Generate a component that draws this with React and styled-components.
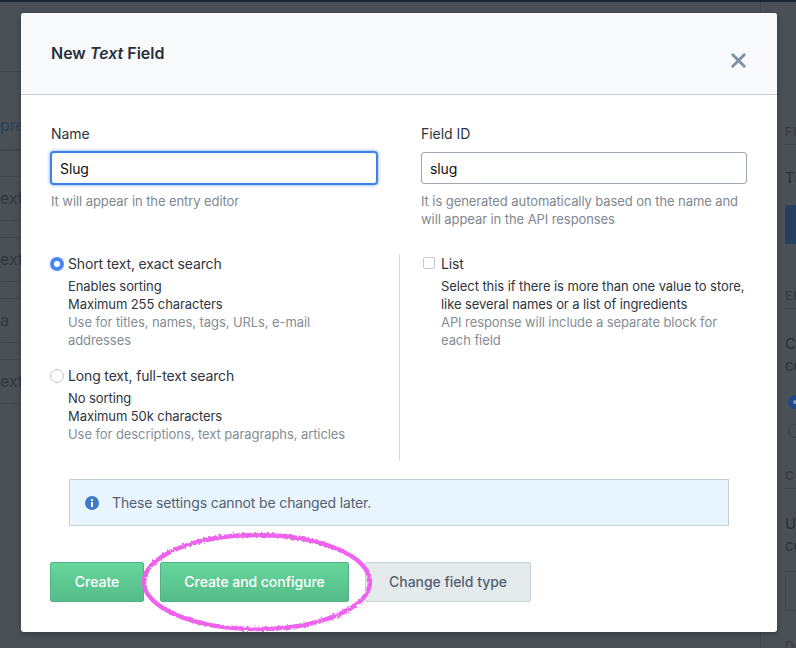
import React from "react";
import styled, { createGlobalStyle } from "styled-components";
import { X } from "lucide-react";

const Global = createGlobalStyle`
  html, body {
    margin: 0;
    padding: 0;
    height: 100%;
    background: #4b5056;
  }
  * { box-sizing: border-box; }
`;

const Page = styled.div`
  position: relative;
  width: 796px;
  height: 648px;
  overflow: hidden;
  background: #4b5056;
  border-top: 2px solid #1d2630;
  font-family: Inter, "Noto Sans", sans-serif;
  font-size: 14px;
  line-height: 18px;
  color: #2f353d;
`;

// What is behind the modal: the content type editor, dimmed
const Backdrop = styled.div`
  display: flex;
  height: 100%;
`;

const Main = styled.div`
  flex: 1;
  overflow: hidden;
`;

const MainHead = styled.div`
  height: 70px;
  border-bottom: 1px solid #41464c;
`;

const TabLabel = styled.div`
  padding-top: 44px;
  height: 79px;
  border-bottom: 2px solid #42474d;
  color: #2d4058;
  font-size: 16px;
  white-space: nowrap;
`;

const BgRow = styled.div`
  height: 45px;
  margin-top: ${(props) => props.$top}px;
  border-top: 1px solid #41464c;
  border-bottom: 1px solid #41464c;
  padding-top: 12px;
  color: #32373d;
  font-size: 16px;
  white-space: nowrap;
`;

const Sidebar = styled.div`
  width: 36px;
  overflow: hidden;
  border-left: 1px solid #43484e;
  padding-left: 24px;
`;

const SideHead = styled.div`
  width: 200px;
  margin-top: ${(props) => props.$top}px;
  padding-bottom: 3px;
  border-bottom: 1px solid #41464c;
  font-size: 12px;
  font-weight: 600;
  letter-spacing: 1px;
  color: #383d43;
`;

const SideText = styled.div`
  width: 200px;
  margin-top: ${(props) => props.$top}px;
  font-size: 15px;
  line-height: 22px;
  color: #2b3037;
`;

const SideButton = styled.div`
  width: 200px;
  height: 39px;
  margin-top: 16px;
  border-radius: 2px;
  background: #25405f;
`;

const SideRadio = styled.div`
  width: 14px;
  height: 14px;
  margin: ${(props) => props.$top}px 0 0 3px;
  border-radius: 50%;
  background: ${(props) => (props.$on ? "#8d96a3" : "transparent")};
  border: ${(props) => (props.$on ? "5px solid #1e4a8a" : "1px solid #3d4248")};
`;

const SideBox = styled.div`
  width: 200px;
  height: 40px;
  margin-top: 14px;
  border: 1px solid #42474d;
`;

const Modal = styled.div`
  position: absolute;
  left: 21px;
  top: 11px;
  width: 756px;
  height: 619px;
  border-radius: 3px;
  background: #fff;
  overflow: hidden;
  box-shadow: 0 2px 6px rgba(0, 0, 0, 0.25);
`;

const ModalHeader = styled.div`
  height: 82px;
  padding: 30px 30px 0;
  display: flex;
  justify-content: space-between;
  background: #f7f9fa;
  border-bottom: 1px solid #c3cfd5;
`;

const Title = styled.h1`
  margin: 0;
  font-size: 16px;
  line-height: 20px;
  font-weight: 600;
  color: #2a3039;
  em { font-style: italic; }
`;

const CloseIcon = styled(X)`
  margin: 5.5px -2.5px 0 0;
  color: #8091a5;
`;

const ModalBody = styled.div`
  padding: 30px 30px 0;
`;

const Columns = styled.div`
  display: grid;
  grid-template-columns: 326px 326px;
  column-gap: 44px;
`;

const Label = styled.label`
  display: block;
  height: 18px;
  margin-bottom: 9px;
  letter-spacing: -0.05px;
  color: #2f353d;
`;

const TextInput = styled.input`
  display: block;
  width: 100%;
  height: 32px;
  padding: 0 8px;
  border-radius: 3px;
  border: 1px solid ${(props) => (props.$focused ? "#3c80ee" : "#a0a7ae")};
  outline: none;
  box-shadow: ${(props) => (props.$focused ? "0 0 0 1px #3c80ee, 0 0 3px 2px #a9c9f5" : "none")};
  font: inherit;
  letter-spacing: -0.1px;
  color: #111;
  background: #fff;
`;

const Hint = styled.div`
  margin-top: 8px;
  font-size: 13px;
  letter-spacing: -0.08px;
  color: #7f8890;
`;

const Options = styled.div`
  display: flex;
  height: 207px;
  margin-top: ${(props) => props.$top}px;
`;

const OptionCol = styled.div`
  width: 348px;
  padding: 1px ${(props) => props.$right || 0}px 0 ${(props) => props.$pad || 0}px;
  border-left: ${(props) => (props.$line ? "1px solid #d3dce0" : "none")};
`;

const Option = styled.div`
  display: flex;
  gap: ${(props) => props.$gap}px;
  margin-bottom: 18px;
`;

const Radio = styled.span`
  flex: none;
  width: 14px;
  height: 14px;
  margin: 2px 0 0 -1px;
  border-radius: 50%;
  background: #fff;
  border: 1px solid #c4c7ca;
  ${(props) => props.$on && "border: 4.5px solid #4a86f7;"}
`;

const Check = styled.span`
  flex: none;
  width: 12px;
  height: 12px;
  margin-top: 2px;
  border-radius: 2px;
  background: #fff;
  border: 1px solid #c4c7ca;
`;

const OptionTitle = styled.div`
  margin-bottom: 4px;
  letter-spacing: -0.15px;
  color: #2f353d;
`;

const OptionLine = styled.div`
  font-size: 13px;
  letter-spacing: -0.08px;
  color: ${(props) => (props.$muted ? "#858d95" : "#2f353d")};
`;

const Note = styled.div`
  display: flex;
  align-items: center;
  gap: 13px;
  height: 47px;
  margin: 18px 18px 0 18px;
  padding-left: 15px;
  background: #e8f5ff;
  border: 1px solid #c3cfd5;
  letter-spacing: -0.15px;
  color: #536171;
`;

const InfoIcon = styled.svg`
  flex: none;
  width: 14px;
  height: 14px;
`;

const Actions = styled.div`
  position: relative;
  display: flex;
  gap: 16px;
  margin: 36px 0 0 -1px;
`;

const Button = styled.button`
  width: ${(props) => props.$w}px;
  height: 40px;
  padding: 0;
  border-radius: 2px;
  font: inherit;
  font-weight: 500;
  letter-spacing: -0.05px;
  background: ${(props) => (props.$muted ? "#e5ebed" : "linear-gradient(#65d69b, #56bc8a)")};
  border: 1px solid ${(props) => (props.$muted ? "#c3cfd5" : "#53b286")};
  color: ${(props) => (props.$muted ? "#536171" : "#fff")};
`;

// the hand-drawn circle somebody put on the screenshot
const Scribble = styled.svg`
  position: absolute;
  left: 87px;
  top: -33px;
  width: 240px;
  height: 106px;
  pointer-events: none;
`;

const App = () => {
  return (
    <Page>
      <Global />
      <Backdrop>
        <Main>
          <MainHead />
          <TabLabel>pre</TabLabel>
          <BgRow $top={25}>ext</BgRow>
          <BgRow $top={16}>ext</BgRow>
          <BgRow $top={16}>a</BgRow>
          <BgRow $top={16}>ext,</BgRow>
        </Main>
        <Sidebar>
          <SideHead $top={121}>FI</SideHead>
          <SideText $top={22}>Th</SideText>
          <SideButton />
          <SideHead $top={43}>EN</SideHead>
          <SideText $top={24}>Cl</SideText>
          <SideText $top={0}>co</SideText>
          <SideRadio $top={18} $on />
          <SideRadio $top={15} />
          <SideHead $top={29}>CO</SideHead>
          <SideText $top={24}>Us</SideText>
          <SideText $top={0}>co</SideText>
          <SideBox />
          <SideHead $top={26}>De</SideHead>
        </Sidebar>
      </Backdrop>

      <Modal>
        <ModalHeader>
          <Title>New <em>Text</em> Field</Title>
          <CloseIcon size={23} strokeWidth={3} />
        </ModalHeader>
        <ModalBody>
          <Columns>
            <div>
              <Label>Name</Label>
              <TextInput $focused defaultValue="Slug" />
              <Hint>It will appear in the entry editor</Hint>
            </div>
            <div>
              <Label>Field ID</Label>
              <TextInput defaultValue="slug" />
              <Hint>It is generated automatically based on the name and will appear in the API responses</Hint>
            </div>
          </Columns>

          <Options $top={26}>
            <OptionCol $right={50}>
              <Option $gap={4}>
                <Radio $on />
                <div>
                  <OptionTitle>Short text, exact search</OptionTitle>
                  <OptionLine>Enables sorting</OptionLine>
                  <OptionLine>Maximum 255 characters</OptionLine>
                  <OptionLine $muted>Use for titles, names, tags, URLs, e-mail addresses</OptionLine>
                </div>
              </Option>
              <Option $gap={4}>
                <Radio />
                <div>
                  <OptionTitle>Long text, full-text search</OptionTitle>
                  <OptionLine>No sorting</OptionLine>
                  <OptionLine>Maximum 50k characters</OptionLine>
                  <OptionLine $muted>Use for descriptions, text paragraphs, articles</OptionLine>
                </div>
              </Option>
            </OptionCol>
            <OptionCol $pad={23} $line>
              <Option $gap={6}>
                <Check />
                <div>
                  <OptionTitle>List</OptionTitle>
                  <OptionLine>Select this if there is more than one value to store, like several names or a list of ingredients</OptionLine>
                  <OptionLine $muted>API response will include a separate block for each field</OptionLine>
                </div>
              </Option>
            </OptionCol>
          </Options>

          <Note>
            <InfoIcon viewBox="0 0 14 14">
              <circle cx="7" cy="7" r="7" fill="#3f7bc9" />
              <rect x="6" y="6" width="2" height="5" fill="#fff" />
              <rect x="6" y="3" width="2" height="2" fill="#fff" />
            </InfoIcon>
            These settings cannot be changed later.
          </Note>

          <Actions>
            <Button $w={94}>Create</Button>
            <Button $w={189}>Create and configure</Button>
            <Button $w={166} $muted>Change field type</Button>
            <Scribble viewBox="0 0 240 106">
              <filter id="rough" x="-10%" y="-10%" width="120%" height="120%">
                <feTurbulence type="fractalNoise" baseFrequency="0.4" numOctaves="2" seed="4" />
                <feDisplacementMap in="SourceGraphic" scale="4" />
              </filter>
              <ellipse cx="120" cy="53" rx="113" ry="47" fill="none" stroke="#ee62ee" strokeWidth="4.4" filter="url(#rough)" />
            </Scribble>
          </Actions>
        </ModalBody>
      </Modal>
    </Page>
  );
};

export default App;
